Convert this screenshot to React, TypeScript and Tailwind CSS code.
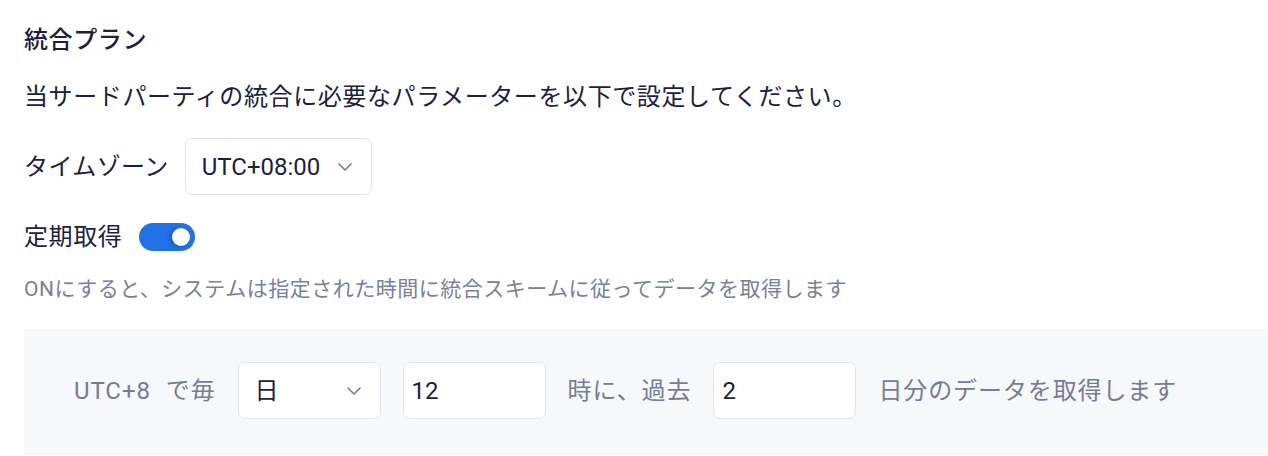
import { ChevronDown } from "lucide-react";

const font = "font-['Roboto','Noto_Sans_CJK_JP',sans-serif]";

function SelectBox({ value, width }: { value: string; width: string }) {
    return (
        <div
            className={`flex items-center justify-between h-[57px] ${width} pl-4 pr-[14px] bg-white border border-[#e3e5ee] rounded-[7px] text-[24px] tracking-normal text-[#1d2040]`}
        >
            <span>{value}</span>
            <ChevronDown className="w-[24px] h-[24px] text-[#7a7f99]" strokeWidth={1.7} />
        </div>
    );
}

function NumberBox({ value }: { value: string }) {
    return (
        <div className="flex items-center h-[57px] w-[143px] px-2 bg-white border border-[#e3e5ee] rounded-[7px] text-[24px] tracking-normal text-[#1d2040]">
            {value}
        </div>
    );
}

export default function App() {
    return (
        <div className={`${font} bg-white min-h-screen pl-6 pt-[24px] text-[#1d2040]`}>
            <h2 className="text-[24px] leading-8 font-medium tracking-[0.6px]">統合プラン</h2>
            <p className="mt-[25px] text-[24px] leading-8 tracking-[0.6px]">
                当サードパーティの統合に必要なパラメーターを以下で設定してください。
            </p>

            <div className="mt-[25px] flex items-center gap-4 text-[24px] tracking-[0.4px]">
                <span>タイムゾーン</span>
                <SelectBox value="UTC+08:00" width="w-[187px]" />
            </div>

            <div className="mt-[26px] flex items-center gap-[17px] text-[24px] leading-8 tracking-[0.6px]">
                <span>定期取得</span>
                <button className="relative w-[56px] h-[28px] rounded-full bg-[#2172e5]">
                    <span className="absolute right-[5px] top-[5px] w-[18px] h-[18px] rounded-full bg-white shadow-[-2px_1px_4px_rgba(0,0,0,0.25)]" />
                </button>
            </div>

            <p className="mt-[22px] text-[21px] leading-7 tracking-[0.5px] text-[#7a8099]">
                ONにすると、システムは指定された時間に統合スキームに従ってデータを取得します
            </p>

            <div className="mt-[26px] bg-[#f7f8fa] pl-[50px] pt-[33px] pb-[36px] flex items-center gap-[22px] text-[24px] tracking-[0.9px] text-[#767c96]">
                <div className="flex items-center">
                    <span className="mr-[15px]">UTC+8</span>
                    <span>で毎</span>
                </div>
                <SelectBox value="日" width="w-[143px]" />
                <NumberBox value="12" />
                <span>時に、過去</span>
                <NumberBox value="2" />
                <span>日分のデータを取得します</span>
            </div>
        </div>
    );
}
